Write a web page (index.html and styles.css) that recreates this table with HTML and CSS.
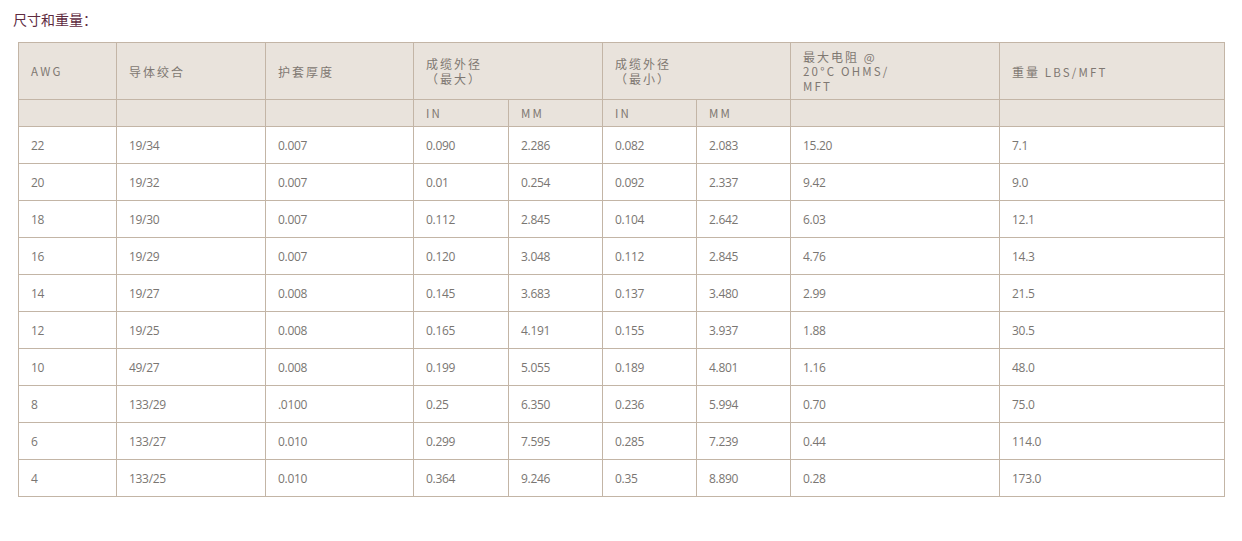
FILE: index.html
```html
<!DOCTYPE html>
<html lang="zh">
<head>
<meta charset="utf-8">
<title>尺寸和重量</title>
<link rel="stylesheet" href="styles.css">
</head>
<body>
<div class="page">
  <p class="title">尺寸和重量：</p>
  <table class="spec">
    <colgroup>
      <col class="c1"><col class="c2"><col class="c3"><col class="c4"><col class="c5"><col class="c6"><col class="c7"><col class="c8"><col class="c9">
    </colgroup>
    <thead>
      <tr class="h1">
        <th><span class="ln en">AWG</span></th>
        <th><span class="ln">导体绞合</span></th>
        <th><span class="ln">护套厚度</span></th>
        <th colspan="2"><span class="ln">成缆外径</span><span class="ln">（最大）</span></th>
        <th colspan="2"><span class="ln">成缆外径</span><span class="ln">（最小）</span></th>
        <th class="top"><span class="ln">最大电阻 <span class="en">@</span></span><span class="ln en">20°C OHMS/</span><span class="ln en">MFT</span></th>
        <th><span class="ln">重量 <span class="en">LBS/MFT</span></span></th>
      </tr>
      <tr class="h2">
        <th></th><th></th><th></th>
        <th><span class="ln en">IN</span></th><th><span class="ln en">MM</span></th><th><span class="ln en">IN</span></th><th><span class="ln en">MM</span></th>
        <th></th><th></th>
      </tr>
    </thead>
    <tbody>
      <tr><td>22</td><td>19/34</td><td>0.007</td><td>0.090</td><td>2.286</td><td>0.082</td><td>2.083</td><td>15.20</td><td>7.1</td></tr>
      <tr><td>20</td><td>19/32</td><td>0.007</td><td>0.01</td><td>0.254</td><td>0.092</td><td>2.337</td><td>9.42</td><td>9.0</td></tr>
      <tr><td>18</td><td>19/30</td><td>0.007</td><td>0.112</td><td>2.845</td><td>0.104</td><td>2.642</td><td>6.03</td><td>12.1</td></tr>
      <tr><td>16</td><td>19/29</td><td>0.007</td><td>0.120</td><td>3.048</td><td>0.112</td><td>2.845</td><td>4.76</td><td>14.3</td></tr>
      <tr><td>14</td><td>19/27</td><td>0.008</td><td>0.145</td><td>3.683</td><td>0.137</td><td>3.480</td><td>2.99</td><td>21.5</td></tr>
      <tr><td>12</td><td>19/25</td><td>0.008</td><td>0.165</td><td>4.191</td><td>0.155</td><td>3.937</td><td>1.88</td><td>30.5</td></tr>
      <tr><td>10</td><td>49/27</td><td>0.008</td><td>0.199</td><td>5.055</td><td>0.189</td><td>4.801</td><td>1.16</td><td>48.0</td></tr>
      <tr><td>8</td><td>133/29</td><td>.0100</td><td>0.25</td><td>6.350</td><td>0.236</td><td>5.994</td><td>0.70</td><td>75.0</td></tr>
      <tr><td>6</td><td>133/27</td><td>0.010</td><td>0.299</td><td>7.595</td><td>0.285</td><td>7.239</td><td>0.44</td><td>114.0</td></tr>
      <tr><td>4</td><td>133/25</td><td>0.010</td><td>0.364</td><td>9.246</td><td>0.35</td><td>8.890</td><td>0.28</td><td>173.0</td></tr>
    </tbody>
  </table>
</div>
</body>
</html>
```

FILE: styles.css
```css
html, body {
  margin: 0;
  padding: 0;
  background: #ffffff;
}

.page {
  padding: 9px 0 0 13px;
  font-family: "Open Sans", "Noto Sans CJK SC", sans-serif;
}

.title {
  margin: 0;
  font-size: 14px;
  line-height: 20px;
  color: #5e2b3f;
  font-family: "Noto Sans CJK SC", sans-serif;
}

.spec {
  margin: 13px 0 0 5px;
  width: 1206px;
  table-layout: fixed;
  border-collapse: collapse;
  border: 1px solid #c3b5a6;
}

.c1 { width: 98px; }
.c2 { width: 149px; }
.c3 { width: 148px; }
.c4 { width: 95px; }
.c5 { width: 94px; }
.c6 { width: 94px; }
.c7 { width: 94px; }
.c8 { width: 209px; }
.c9 { width: 225px; }

.spec th,
.spec td {
  border: 1px solid #c3b5a6;
  padding: 0 12px;
  text-align: left;
  vertical-align: middle;
  box-sizing: border-box;
}

.spec th {
  background: #e9e3dc;
  color: #7f7872;
  font-family: "Noto Sans CJK SC", sans-serif;
  font-weight: normal;
  font-size: 12px;
  letter-spacing: 2px;
  line-height: 15px;
}

.spec th .ln {
  display: block;
  height: 15px;
  white-space: nowrap;
}

.spec th .en {
  font-size: 11.5px;
  letter-spacing: 2.2px;
}

.spec .h1 th {
  height: 57px;
}

.spec .h1 th.top {
  vertical-align: top;
  padding-top: 6px;
}

.spec .h2 th {
  height: 27px;
}

.spec td {
  height: 37px;
  padding-top: 1px;
  font-size: 12px;
  letter-spacing: -0.3px;
  color: #7a7672;
  line-height: 16px;
}
```
